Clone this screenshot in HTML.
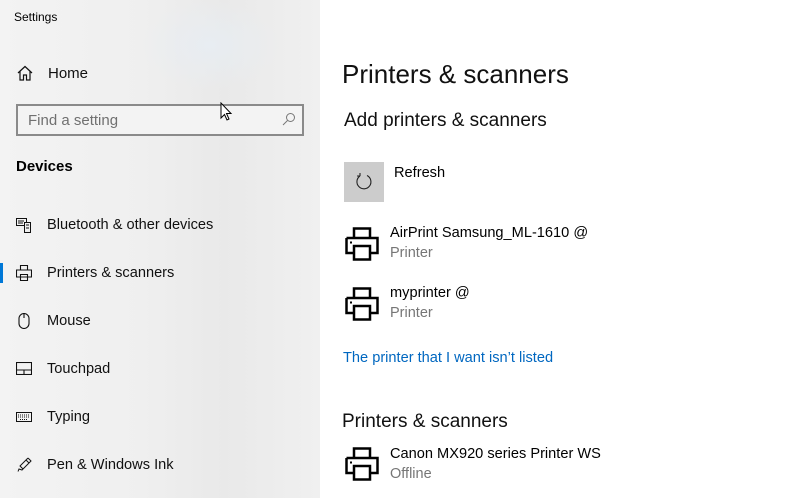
<!DOCTYPE html>
<html><head><meta charset="utf-8"><style>
*{margin:0;padding:0;box-sizing:border-box}
body{width:800px;height:498px;overflow:hidden;font-family:"Liberation Sans",sans-serif;background:#fff;position:relative;color:#000}
#side{position:absolute;left:0;top:0;width:320px;height:498px;background:linear-gradient(90deg,#f3f3f3 0%,#efefef 45%,#e9e9e9 70%,#f0f0f0 100%)}
#side:before{content:"";position:absolute;left:140px;top:0;width:140px;height:90px;background:radial-gradient(ellipse at center,#e8edf2 0%,rgba(240,240,240,0) 70%)}
.t{position:absolute;white-space:nowrap}
.nav{font-size:15px;color:#111}
.ic{position:absolute}
.sub{color:#767676;font-size:14.5px}
</style></head><body>
<div id="side">
<div class="t" style="left:14px;top:10px;font-size:12px">Settings</div>
<svg class="ic" style="left:17px;top:65px" width="16" height="16" viewBox="0 0 16 16" fill="none" stroke="#111" stroke-width="1.2"><path d="M1 8L8 1.5L15 8M3 6.5V15H6.5V10H9.5V15H13V6.5"/></svg>
<div class="t nav" style="left:48px;top:65px">Home</div>
<div style="position:absolute;left:16px;top:104px;width:288px;height:32px;border:2px solid #8a8a8a;background:#f3f3f3"></div>
<div class="t" style="left:28px;top:112px;font-size:15px;color:#707070">Find a setting</div>
<svg class="ic" style="left:282px;top:112px" width="14" height="14" viewBox="0 0 14 14" fill="none" stroke="#777" stroke-width="1"><circle cx="8.5" cy="5.5" r="4"/><path d="M5.5 8.5L1 13"/></svg>
<svg class="ic" style="left:220px;top:102px" width="14" height="20" viewBox="0 0 14 20"><path d="M1 1V16L4.5 12.5L7 18L9 17L6.5 11.5H11Z" fill="#fff" stroke="#000" stroke-width="1"/></svg>
<div class="t" style="left:16px;top:158px;font-size:15px;font-weight:bold">Devices</div>
<svg class="ic" style="left:16px;top:217px" width="16" height="16" viewBox="0 0 16 16" fill="none" stroke="#111" stroke-width="1"><rect x="0.5" y="1.5" width="10" height="7"/><rect x="8.5" y="5.5" width="6" height="10" fill="#eee"/><path d="M2 4h6M2 6h5M10 8h3M10 11h3"/></svg>
<div class="t nav" style="left:47px;top:217px;font-size:14.6px">Bluetooth &amp; other devices</div>
<div style="position:absolute;left:0;top:263px;width:3px;height:20px;background:#0078d7"></div>
<svg class="ic" style="left:16px;top:265px" width="16" height="16" viewBox="0 0 16 16" fill="none" stroke="#111" stroke-width="1.1"><path d="M4.5 5V0.5H11.5V5M0.5 5H15.5V12H0.5ZM4.5 9.5H11.5V15.5H4.5Z"/></svg>
<div class="t nav" style="left:47px;top:265px;font-size:14.6px">Printers &amp; scanners</div>
<svg class="ic" style="left:18px;top:313px" width="12" height="16" viewBox="0 0 12 16" fill="none" stroke="#111" stroke-width="1.1"><path d="M1 5.5A5 5 0 0 1 11 5.5V10.5A5 5 0 0 1 1 10.5ZM6 1V5"/></svg>
<div class="t nav" style="left:47px;top:313px;font-size:14.6px">Mouse</div>
<svg class="ic" style="left:16px;top:362px" width="16" height="13" viewBox="0 0 16 13" fill="none" stroke="#111" stroke-width="1.1"><rect x="0.5" y="0.5" width="15" height="12"/><path d="M0.5 8H15.5M8 8V12.5"/></svg>
<div class="t nav" style="left:47px;top:361px;font-size:14.6px">Touchpad</div>
<svg class="ic" style="left:16px;top:412px" width="16" height="10" viewBox="0 0 16 10" fill="none" stroke="#111" stroke-width="1"><rect x="0.5" y="0.5" width="15" height="9"/><path d="M2 3h12M2 5h12M4 7.5h8" stroke-dasharray="1 1"/></svg>
<div class="t nav" style="left:47px;top:409px;font-size:14.6px">Typing</div>
<svg class="ic" style="left:16px;top:457px" width="16" height="16" viewBox="0 0 16 16" fill="none" stroke="#111" stroke-width="1"><path d="M12 1L15 4L6 13L3 12L2 14.5M12 1L4 9L7 12M10 3L13 6"/></svg>
<div class="t nav" style="left:47px;top:457px;font-size:14.6px">Pen &amp; Windows Ink</div>
</div>

<div class="t" style="left:342px;top:59px;font-size:26px;color:#111">Printers &amp; scanners</div>
<div class="t" style="left:344px;top:110px;font-size:19px;color:#111">Add printers &amp; scanners</div>
<div style="position:absolute;left:344px;top:162px;width:40px;height:40px;background:#cccccc"></div>
<svg class="ic" style="left:354px;top:172px" width="20" height="20" viewBox="0 0 20 20" fill="none" stroke="#222" stroke-width="1.1"><path d="M6 4A7 7 0 1 0 13 3.5M6 4V1M6 4H3"/></svg>
<div class="t" style="left:394px;top:165px;font-size:14.6px">Refresh</div>

<svg class="ic" style="left:345px;top:227px" width="34" height="34" viewBox="0 0 34 34" fill="none" stroke="#000" stroke-width="2.5"><path d="M9 11V1.5H25V11M1.5 11H32.5V26H25M9 26H1.5V11M9 19H25V32.5H9Z"/><rect x="5" y="14.5" width="2" height="2" fill="#000" stroke="none"/></svg>
<div class="t" style="left:390px;top:225px;font-size:14.6px">AirPrint Samsung_ML-1610 @</div>
<div class="t sub" style="left:390px;top:245px">Printer</div>

<svg class="ic" style="left:345px;top:287px" width="34" height="34" viewBox="0 0 34 34" fill="none" stroke="#000" stroke-width="2.5"><path d="M9 11V1.5H25V11M1.5 11H32.5V26H25M9 26H1.5V11M9 19H25V32.5H9Z"/><rect x="5" y="14.5" width="2" height="2" fill="#000" stroke="none"/></svg>
<div class="t" style="left:390px;top:285px;font-size:14.6px">myprinter @</div>
<div class="t sub" style="left:390px;top:305px">Printer</div>

<div class="t" style="left:343px;top:350px;font-size:14.6px;color:#0067c0">The printer that I want isn’t listed</div>
<div class="t" style="left:342px;top:411px;font-size:19px;color:#111">Printers &amp; scanners</div>
<svg class="ic" style="left:345px;top:447px" width="34" height="34" viewBox="0 0 34 34" fill="none" stroke="#000" stroke-width="2.5"><path d="M9 11V1.5H25V11M1.5 11H32.5V26H25M9 26H1.5V11M9 19H25V32.5H9Z"/><rect x="5" y="14.5" width="2" height="2" fill="#000" stroke="none"/></svg>
<div class="t" style="left:390px;top:446px;font-size:14.6px">Canon MX920 series Printer WS</div>
<div class="t sub" style="left:390px;top:466px">Offline</div>
</body></html>
